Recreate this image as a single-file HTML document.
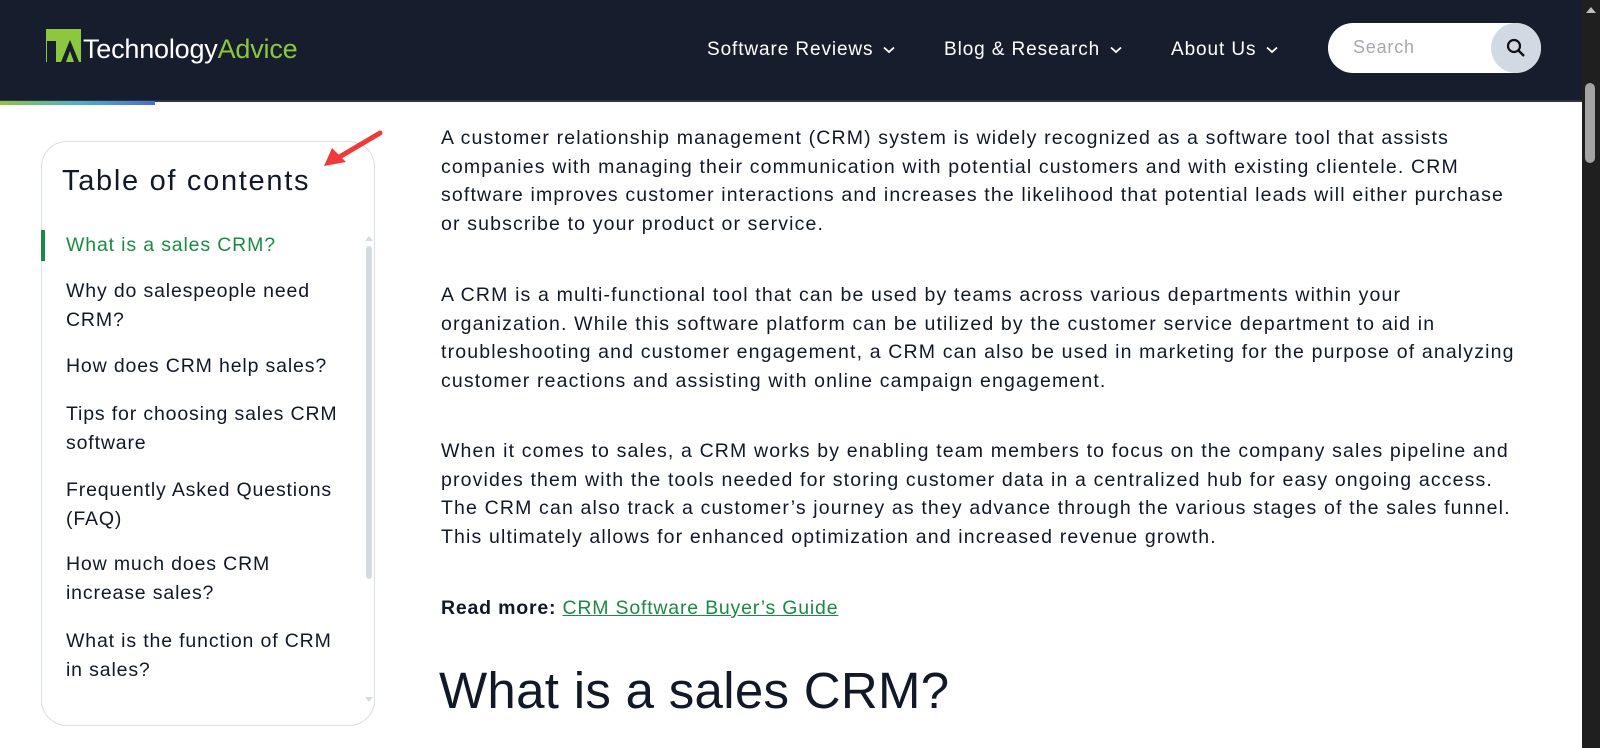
<!DOCTYPE html>
<html><head><meta charset="utf-8"><style>
*{margin:0;padding:0;box-sizing:border-box}
body{width:1600px;height:748px;overflow:hidden;background:#fff;font-family:"Liberation Sans",sans-serif;color:#111827;position:relative}
.hdr{position:absolute;left:0;top:0;width:1582px;height:102px;background:#161e2d;border-bottom:2px solid #2c3546}
.grad{position:absolute;left:0;top:101px;width:155px;height:4px;background:linear-gradient(90deg,#8dc63f,#4fb0c6,#4a6fd0)}
.sb{position:absolute;left:1582px;top:0;width:18px;height:748px;background:#1f1f1f}
.sbt{position:absolute;left:1585px;top:83px;width:10px;height:80px;background:#a3a3a3;border-radius:5px}
.nav{position:absolute;top:39px;color:#fff;font-size:19px;letter-spacing:0.9px;white-space:nowrap}
.nav svg{margin-left:10px;vertical-align:middle}
.search{position:absolute;left:1328px;top:23px;width:213px;height:50px;background:#fff;border-radius:25px}
.search span{position:absolute;left:25px;top:14px;font-size:18px;color:#a6a8ad;letter-spacing:.8px}
.sbtn{position:absolute;right:0;top:0;width:50px;height:50px;border-radius:25px;background:#d1dae3}
.p{position:absolute;left:441px;font-size:19.5px;letter-spacing:1.15px;line-height:28.7px;white-space:nowrap;color:#111827}
.toc{position:absolute;left:41px;top:141px;width:334px;height:585px;border:1px solid #d6dee6;border-radius:26px}
.ti{position:absolute;left:66px;font-size:19.5px;letter-spacing:0.85px;line-height:28.6px;white-space:nowrap;color:#111827}
</style></head><body>
<div class="hdr"></div>
<div class="grad"></div>
<div class="sb"></div><div class="sbt"></div>
<svg style="position:absolute;left:1586px;top:6px" width="10" height="8"><path d="M0 7L5 1L10 7Z" fill="#bdbdbd"/></svg>
<div style="position:absolute;left:46px;top:29px;width:35px;height:33px;background:#8dc63f"></div>
<div style="position:absolute;left:47px;top:41px;width:9px;height:21px;background:#161e2d"></div>
<div style="position:absolute;left:58px;top:38px;width:3px;height:24px;background:#8dc63f"></div>
<svg style="position:absolute;left:59px;top:38px" width="22" height="24"><path d="M2 24L11 2L20 24H15L11 13L7 24Z" fill="#161e2d"/></svg>
<div style="position:absolute;left:83px;top:34px;font-size:27px;color:#fff;letter-spacing:-0.2px;white-space:nowrap">Technology<span style="color:#8dc63f">Advice</span></div>
<div class="nav" style="left:707px">Software Reviews<svg width="12" height="8"><path d="M1 1.5L6 6L11 1.5" stroke="#fff" stroke-width="1.8" fill="none"/></svg></div>
<div class="nav" style="left:944px">Blog &amp; Research<svg width="12" height="8"><path d="M1 1.5L6 6L11 1.5" stroke="#fff" stroke-width="1.8" fill="none"/></svg></div>
<div class="nav" style="left:1171px">About Us<svg width="12" height="8"><path d="M1 1.5L6 6L11 1.5" stroke="#fff" stroke-width="1.8" fill="none"/></svg></div>
<div class="search"><span>Search</span><div class="sbtn"><svg style="position:absolute;left:15px;top:15px" width="20" height="20"><circle cx="8" cy="8" r="6" stroke="#111" stroke-width="2.2" fill="none"/><path d="M12.5 12.5L18 18" stroke="#111" stroke-width="2.4"/></svg></div></div>

<div class="p" style="top:124px">A customer relationship management (CRM) system is widely recognized as a software tool that assists<br>companies with managing their communication with potential customers and with existing clientele. CRM<br>software improves customer interactions and increases the likelihood that potential leads will either purchase<br>or subscribe to your product or service.</div>
<div class="p" style="top:281px">A CRM is a multi-functional tool that can be used by teams across various departments within your<br>organization. While this software platform can be utilized by the customer service department to aid in<br>troubleshooting and customer engagement, a CRM can also be used in marketing for the purpose of analyzing<br>customer reactions and assisting with online campaign engagement.</div>
<div class="p" style="top:437px">When it comes to sales, a CRM works by enabling team members to focus on the company sales pipeline and<br>provides them with the tools needed for storing customer data in a centralized hub for easy ongoing access.<br>The CRM can also track a customer’s journey as they advance through the various stages of the sales funnel.<br>This ultimately allows for enhanced optimization and increased revenue growth.</div>
<div class="p" style="top:594px;letter-spacing:0.8px"><b>Read more:</b> <span style="color:#1a8a44;text-decoration:underline">CRM Software Buyer’s Guide</span></div>
<div style="position:absolute;left:439px;top:660px;font-size:51px;line-height:62px;color:#111827;white-space:nowrap;letter-spacing:0.3px">What is a sales CRM?</div>

<div class="toc"></div>
<div style="position:absolute;left:62px;top:163px;font-size:29px;line-height:36px;color:#111827;white-space:nowrap;letter-spacing:1.7px">Table of contents</div>
<div style="position:absolute;left:41px;top:230px;width:4px;height:31px;background:#1a8a44"></div>
<div class="ti" style="top:231px;color:#1a8a44">What is a sales CRM?</div>
<div class="ti" style="top:277px">Why do salespeople need<br>CRM?</div>
<div class="ti" style="top:352px">How does CRM help sales?</div>
<div class="ti" style="top:400px">Tips for choosing sales CRM<br>software</div>
<div class="ti" style="top:476px">Frequently Asked Questions<br>(FAQ)</div>
<div class="ti" style="top:550px">How much does CRM<br>increase sales?</div>
<div class="ti" style="top:627px">What is the function of CRM<br>in sales?</div>
<div style="position:absolute;left:366px;top:246px;width:6px;height:333px;background:#d3dbe3;border-radius:3px"></div>
<svg style="position:absolute;left:365px;top:235px" width="8" height="6"><path d="M0 6L4 1L8 6Z" fill="#d3dbe3"/></svg>
<svg style="position:absolute;left:365px;top:697px" width="8" height="6"><path d="M0 0L4 5L8 0Z" fill="#d3dbe3"/></svg>
<svg style="position:absolute;left:318px;top:128px" width="70" height="46"><path d="M62 5L18 31" stroke="#f03a3a" stroke-width="5" stroke-linecap="round"/><path d="M6 38L14 20L28 34Z" fill="#f03a3a"/></svg>
</body></html>
